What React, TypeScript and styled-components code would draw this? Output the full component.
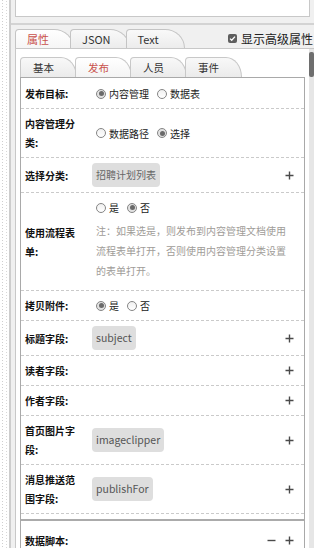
import React from 'react';
import styled, { createGlobalStyle } from 'styled-components';

const GlobalStyle = createGlobalStyle`
  html, body { margin: 0; padding: 0; width: 314px; height: 548px; overflow: hidden; background: #fff; }
  body { font-family: "Noto Sans CJK SC", "Noto Sans", sans-serif; color: #222; }
  * { box-sizing: border-box; }
`;

const Root = styled.div`
  display: flex;
  width: 314px;
  height: 548px;
  overflow: hidden;
`;

const DotStrip = styled.div`
  flex: none;
  width: 9px;
  background-color: #fff;
  background-image:
    repeating-linear-gradient(to bottom, #cfcfcf 0 1px, transparent 1px 3px),
    repeating-linear-gradient(to bottom, #d8d8d8 0 1px, transparent 1px 3px);
  background-size: 1px 100%, 1px 100%;
  background-position: 2px 0, 6px 1px;
  background-repeat: no-repeat;
`;

const Main = styled.div`
  flex: 1;
  min-width: 0;
  display: flex;
  flex-direction: column;
  background: #f0f0f0;
  border-left: 2px solid #cdcdcd;
`;

const TopBox = styled.div`
  height: 17px;
  margin: 0 4px 0 4px;
  background: #fff;
  border: 1px solid #c8c8c8;
  border-top: none;
`;

const Separator = styled.div`
  height: 2px;
  margin-top: 6px;
  background: #d3d3d3;
`;

const TabRow = styled.div`
  display: flex;
  align-items: flex-end;
  height: 19px;
  margin-top: 4px;
  padding-left: 4px;
`;

const OuterTab = styled.div<{ $active?: boolean }>`
  display: flex;
  align-items: center;
  height: 19px;
  min-width: 59px;
  margin-right: -4px;
  padding: 0 18px 0 11px;
  font-size: 11px;
  color: ${(p) => (p.$active ? '#c9514b' : '#333')};
  background: ${(p) => (p.$active ? 'linear-gradient(#ffffff, #f6f6f6)' : 'linear-gradient(#f9f9f9, #ececec)')};
  border: 1px solid #c4c4c4;
  border-bottom: none;
  border-radius: 4px 20px 0 0 / 4px 19px 0 0;
`;

const CheckWrap = styled.label`
  margin-left: auto;
  align-self: center;
  display: flex;
  align-items: center;
  gap: 4px;
  font-size: 12px;
  color: #222;
  white-space: nowrap;
  padding-right: 1px;
`;

const CheckBox = styled.span`
  display: inline-flex;
  align-items: center;
  justify-content: center;
  width: 9px;
  height: 9px;
  border-radius: 2px;
  background: #5e5e5e;
`;

const Panel = styled.div`
  flex: 1;
  min-height: 0;
  display: flex;
  margin-left: 4px;
  background: #fff;
  border-top: 1px solid #c8c8c8;
  border-left: 1px solid #c8c8c8;
`;

const PanelBody = styled.div`
  flex: 1;
  min-width: 0;
  padding: 8px 4px 0 4px;
  display: flex;
  flex-direction: column;
`;

const ScrollTrack = styled.div`
  flex: none;
  width: 5px;
  background: #e6e6e6;
`;

const ScrollThumb = styled.div`
  margin-top: 3px;
  height: 25px;
  border-radius: 2px;
  background: #6e6e6e;
`;

const InnerTabs = styled.div`
  display: flex;
  height: 20px;
`;

const InnerTab = styled.div<{ $active?: boolean }>`
  display: flex;
  align-items: center;
  height: 20px;
  min-width: 57px;
  margin-right: -2px;
  padding: 0 18px 0 12px;
  font-size: 10.5px;
  color: ${(p) => (p.$active ? '#c9514b' : '#333')};
  background: ${(p) => (p.$active ? 'linear-gradient(#ffffff, #f4f4f4)' : 'linear-gradient(#f8f8f8, #ebebeb)')};
  border: 1px solid #c8c8c8;
  border-bottom: none;
  border-radius: 4px 16px 0 0 / 4px 20px 0 0;
`;

const ContentBox = styled.div`
  flex: 1;
  border: 1px solid #a9a9a9;
  border-bottom: none;
  padding-top: 1px;
`;

const Row = styled.div`
  display: grid;
  grid-template-columns: 67px 1fr 10px;
  align-items: center;
  padding: 5px 10px 5px 4px;
  border-bottom: 1px dashed #cacaca;
`;

const PlainRow = styled(Row)`
  border-bottom: none;
  grid-template-columns: 67px 1fr auto;
`;

const Label = styled.div`
  width: 56px;
  font-size: 10px;
  font-weight: bold;
  line-height: 19px;
  color: #111;
`;

const Value = styled.div<{ $wide?: boolean }>`
  grid-column: ${(p) => (p.$wide ? '2 / span 2' : 'auto')};
  font-size: 10px;
  line-height: 19px;
  color: #222;
`;

const RadioGroup = styled.div`
  display: flex;
  align-items: center;
  height: 19px;
  padding-left: 4px;
`;

const RadioItem = styled.span`
  display: inline-flex;
  align-items: center;
  gap: 3px;
  margin-right: 8px;
`;

const RadioCircle = styled.span<{ $checked?: boolean }>`
  display: inline-flex;
  align-items: center;
  justify-content: center;
  width: 10px;
  height: 10px;
  border-radius: 50%;
  border: 1px solid #858585;
  background: ${(p) => (p.$checked ? '#e2e2e2' : 'linear-gradient(#f0f0f0, #ffffff)')};
  &::after {
    content: '';
    display: ${(p) => (p.$checked ? 'block' : 'none')};
    width: 5px;
    height: 5px;
    border-radius: 50%;
    background: #6a6a6a;
  }
`;

const Chip = styled.span<{ $latin?: boolean }>`
  display: inline-block;
  vertical-align: middle;
  height: 24px;
  line-height: 24px;
  padding: 0 4px;
  border-radius: 4px;
  background: #dedede;
  font-size: ${(p) => (p.$latin ? '10.5px' : '10px')};
  white-space: nowrap;
  color: ${(p) => (p.$latin ? '#555' : '#666')};
`;

const Note = styled.div`
  margin: 4px 0 4px;
  padding-left: 4px;
  font-size: 10px;
  line-height: 20px;
  color: #a09c98;
`;

const IconBtn = styled.span`
  display: inline-flex;
  align-items: center;
  justify-content: center;
  width: 10px;
  height: 10px;
`;

const Icons = styled.div`
  display: flex;
  align-items: center;
  gap: 8px;
`;

const SectionGap = styled.div`
  height: 5px;
`;

const ScriptSection = styled.div`
  border-top: 2px solid #ababab;
  padding-top: 5px;
`;

const Plus = () => (
  <IconBtn>
    <svg width="9" height="9" viewBox="0 0 9 9">
      <path d="M4.5 0.5v8M0.5 4.5h8" stroke="#4a4a4a" strokeWidth="1.4" />
    </svg>
  </IconBtn>
);

const Minus = () => (
  <IconBtn>
    <svg width="9" height="9" viewBox="0 0 9 9">
      <path d="M0.5 4.5h8" stroke="#4a4a4a" strokeWidth="1.4" />
    </svg>
  </IconBtn>
);

type Opt = { label: string; checked?: boolean };

const Radios = ({ options }: { options: Opt[] }) => (
  <RadioGroup>
    {options.map((o) => (
      <RadioItem key={o.label}>
        <RadioCircle $checked={o.checked} />
        {o.label}
      </RadioItem>
    ))}
  </RadioGroup>
);

type FieldRow = { label: string; chip?: string; latin?: boolean; plus?: boolean; radios?: Opt[]; note?: string };

const rows: FieldRow[] = [
  { label: '发布目标:', radios: [{ label: '内容管理', checked: true }, { label: '数据表' }] },
  { label: '内容管理分类:', radios: [{ label: '数据路径' }, { label: '选择', checked: true }] },
  { label: '选择分类:', chip: '招聘计划列表', plus: true },
  {
    label: '使用流程表单:',
    radios: [{ label: '是' }, { label: '否', checked: true }],
    note: '注：如果选是，则发布到内容管理文档使用流程表单打开，否则使用内容管理分类设置的表单打开。',
  },
  { label: '拷贝附件:', radios: [{ label: '是', checked: true }, { label: '否' }] },
  { label: '标题字段:', chip: 'subject', latin: true, plus: true },
  { label: '读者字段:', plus: true },
  { label: '作者字段:', plus: true },
  { label: '首页图片字段:', chip: 'imageclipper', latin: true, plus: true },
  { label: '消息推送范围字段:', chip: 'publishFor', latin: true, plus: true },
];

export default function App() {
  return (
    <>
      <GlobalStyle />
      <Root>
        <DotStrip />
        <Main>
          <TopBox />
          <Separator />
          <TabRow>
            <OuterTab $active>属性</OuterTab>
            <OuterTab>JSON</OuterTab>
            <OuterTab>Text</OuterTab>
            <CheckWrap>
              <CheckBox>
                <svg width="7" height="7" viewBox="0 0 7 7">
                  <path d="M1 3.6l1.7 1.7L6 1.6" stroke="#fff" strokeWidth="1.3" fill="none" />
                </svg>
              </CheckBox>
              显示高级属性
            </CheckWrap>
          </TabRow>
          <Panel>
            <PanelBody>
              <InnerTabs>
                <InnerTab>基本</InnerTab>
                <InnerTab $active>发布</InnerTab>
                <InnerTab>人员</InnerTab>
                <InnerTab>事件</InnerTab>
              </InnerTabs>
              <ContentBox>
                {rows.map((r) => (
                  <Row key={r.label}>
                    <Label>{r.label}</Label>
                    <Value $wide={!r.plus}>
                      {r.radios && <Radios options={r.radios} />}
                      {r.note && <Note>{r.note}</Note>}
                      {r.chip && <Chip $latin={r.latin}>{r.chip}</Chip>}
                    </Value>
                    {r.plus && <Plus />}
                  </Row>
                ))}
                <SectionGap />
                <ScriptSection>
                  <PlainRow>
                    <Label>数据脚本:</Label>
                    <Value />
                    <Icons>
                      <Minus />
                      <Plus />
                    </Icons>
                  </PlainRow>
                </ScriptSection>
              </ContentBox>
            </PanelBody>
            <ScrollTrack>
              <ScrollThumb />
            </ScrollTrack>
          </Panel>
        </Main>
      </Root>
    </>
  );
}
